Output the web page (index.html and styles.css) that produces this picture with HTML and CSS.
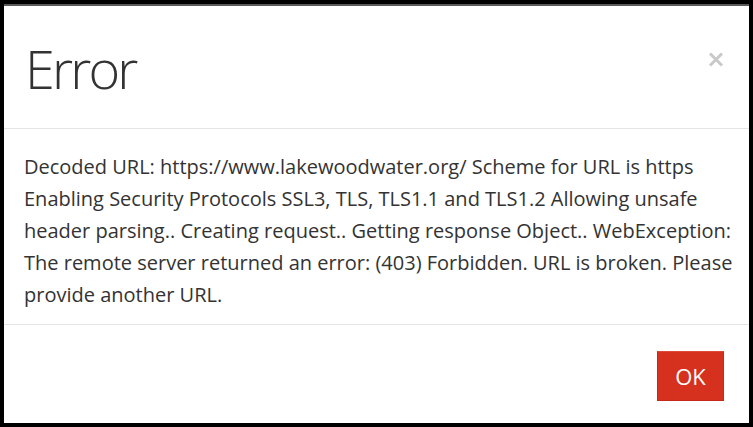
FILE: index.html
```html
<!DOCTYPE html>
<html lang="en">
<head>
<meta charset="utf-8">
<title>Error</title>
<link rel="stylesheet" href="styles.css">
</head>
<body>
<div class="modal">
  <div class="modal-header">
    <h1 class="modal-title">Error</h1>
    <button class="close" aria-label="Close">
      <svg width="16" height="15" viewBox="0 0 16 15"><path d="M2 1.5 L14 13.5 M14 1.5 L2 13.5" stroke="#c9c9c9" stroke-width="3" fill="none"/></svg>
    </button>
  </div>
  <div class="modal-body">
    <p class="message">Decoded URL: https://www.lakewoodwater.org/ Scheme for URL is https<br>Enabling Security Protocols SSL3, TLS, TLS1.1 and TLS1.2 Allowing unsafe<br>header parsing.. Creating request.. Getting response Object.. WebException:<br>The remote server returned an error: (403) Forbidden. URL is broken. Please<br>provide another URL.</p>
  </div>
  <div class="modal-footer">
    <button class="btn-ok">OK</button>
  </div>
</div>
</body>
</html>
```
FILE: styles.css
```css
html, body {
  margin: 0;
  padding: 0;
  background: #000;
}
body {
  padding: 4px;
  font-family: "Segoe UI", "Open Sans", "Noto Sans", sans-serif;
  color: #333;
}
.modal {
  background: #fff;
  border-top: 2px solid #5a5a5a;
  height: 417px;
  display: flex;
  flex-direction: column;
}
.modal-header {
  height: 122px;
  border-bottom: 1px solid #e5e5e5;
  display: flex;
  align-items: flex-start;
  justify-content: space-between;
  padding: 0 25px 0 21px;
}
.modal-title {
  margin: 0;
  padding-top: 26px;
  font-family: "Open Sans", sans-serif;
  font-weight: 300;
  font-size: 54px;
  line-height: 72px;
  letter-spacing: -2.8px;
  color: #333;
}
.close {
  margin-top: 46px;
  padding: 0;
  border: 0;
  background: transparent;
  width: 16px;
  height: 15px;
  display: block;
}
.close svg { display: block; }
.modal-body {
  height: 195px;
  border-bottom: 1px solid #e5e5e5;
  padding: 0 20px 0 20px;
}
.message {
  margin: 0;
  padding-top: 22px;
  font-size: 20px;
  line-height: 32px;
  white-space: nowrap;
}
.modal-footer {
  flex: 1;
  display: flex;
  align-items: center;
  justify-content: flex-end;
  padding: 0 25px 0 0;
}
.btn-ok {
  margin-top: 3px;
  width: 67px;
  height: 50px;
  background: #d6301e;
  border: 1px solid #c42a1a;
  border-top-color: #df4a3a;
  color: #fff;
  font-family: "Segoe UI", "Open Sans", sans-serif;
  font-size: 22px;
  padding: 0;
}
```
